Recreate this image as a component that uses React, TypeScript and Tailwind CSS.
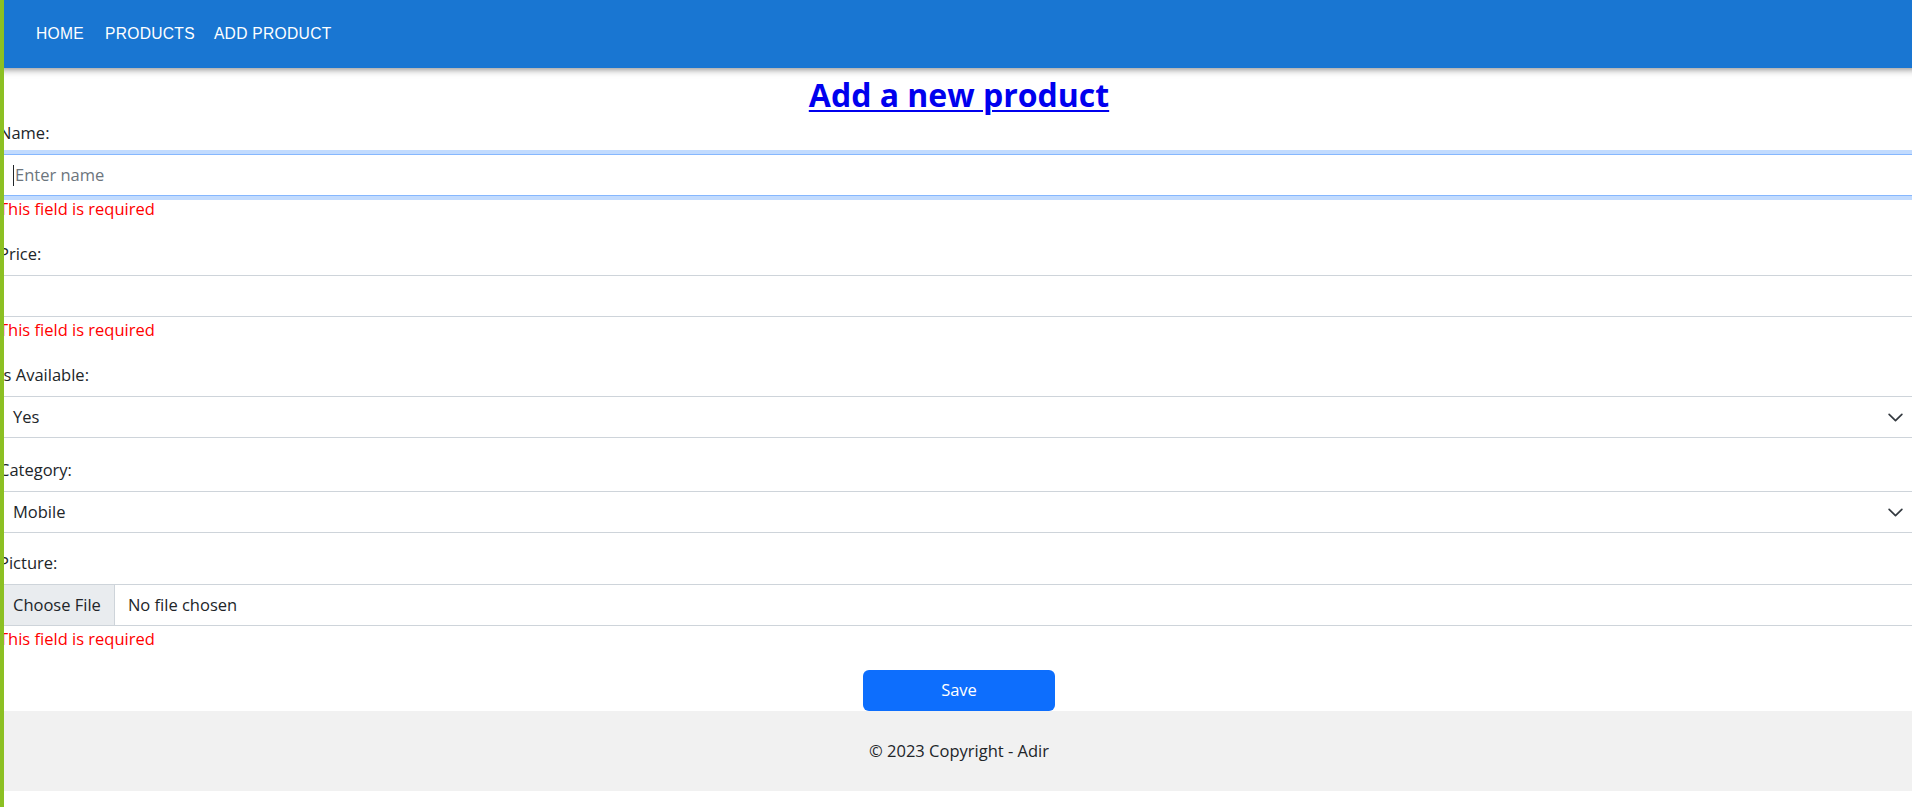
const labelClass = "block h-[26px] leading-[26px] mb-[8px]";
const boxClass = "flex h-[42px] items-center border border-[#ced4da] bg-white";
const errorClass = "h-[26px] leading-[26px] text-[#ff0000]";

const Chevron = () => (
  <svg width="17" height="17" viewBox="0 0 16 16" fill="none">
    <path d="M2 5l6 6 6-6" stroke="#343a40" strokeWidth="1.6" strokeLinecap="round" strokeLinejoin="round" />
  </svg>
);

const SelectBox = ({ value }: { value: string }) => (
  <div className={`${boxClass} justify-between pl-[13px] pr-[14px]`}>
    <span>{value}</span>
    <Chevron />
  </div>
);

export default function App() {
  return (
    <div className="relative min-h-screen w-full overflow-hidden bg-white">
      <div className="absolute left-0 top-0 z-10 h-full w-[4px] bg-[#8cc023]" />
      <div className="-ml-px w-[1920px] font-['Open_Sans',sans-serif] text-[16.5px] text-[#212529]">
        <nav className="relative z-[1] flex h-[68px] items-center bg-[#1976d2] pl-[37px] font-['Liberation_Sans',Arial,sans-serif] text-[15.6px] tracking-[0.3px] text-white shadow-[0_2px_4px_-1px_rgba(0,0,0,0.2),0_4px_5px_0_rgba(0,0,0,0.14),0_1px_10px_0_rgba(0,0,0,0.12)]">
          <span>HOME</span>
          <span className="ml-[21px]">PRODUCTS</span>
          <span className="ml-[19px]">ADD PRODUCT</span>
        </nav>

        <h1 className="mt-[6px] mb-[4px] h-[42px] text-center text-[32px] font-bold leading-[42px] text-[#0000ee] underline decoration-2 underline-offset-[3px]">
          Add a new product
        </h1>

        <form>
          <div className="mb-[19px]">
            <label className={labelClass}>Name:</label>
            <div className="flex h-[42px] items-center border border-[#86b7fe] bg-white pl-[13px] shadow-[0_0_0_4px_rgba(13,110,253,0.25)]">
              <span className="mr-px h-[21px] w-px bg-[#212529]" />
              <span className="text-[#6c757d]">Enter name</span>
            </div>
            <div className={errorClass}>This field is required</div>
          </div>

          <div className="mb-[19px]">
            <label className={labelClass}>Price:</label>
            <div className={boxClass} />
            <div className={errorClass}>This field is required</div>
          </div>

          <div className="mb-[19px]">
            <label className={labelClass}>Is Available:</label>
            <SelectBox value="Yes" />
          </div>

          <div className="mb-[17px]">
            <label className={labelClass}>Category:</label>
            <SelectBox value="Mobile" />
          </div>

          <div className="mb-[18px]">
            <label className={labelClass}>Picture:</label>
            <div className={boxClass}>
              <span className="flex h-full items-center border-r border-[#ced4da] bg-[#e9ecef] px-[13px]">
                Choose File
              </span>
              <span className="ml-[13px]">No file chosen</span>
            </div>
            <div className={errorClass}>This field is required</div>
          </div>

          <div className="flex justify-center">
            <button
              type="button"
              className="h-[41px] w-[192px] rounded-[6px] bg-[#0d6efd] text-white"
            >
              Save
            </button>
          </div>
        </form>

        <footer className="flex h-[80px] items-center justify-center bg-[#f1f1f1]">
          © 2023 Copyright - Adir
        </footer>
      </div>
    </div>
  );
}
